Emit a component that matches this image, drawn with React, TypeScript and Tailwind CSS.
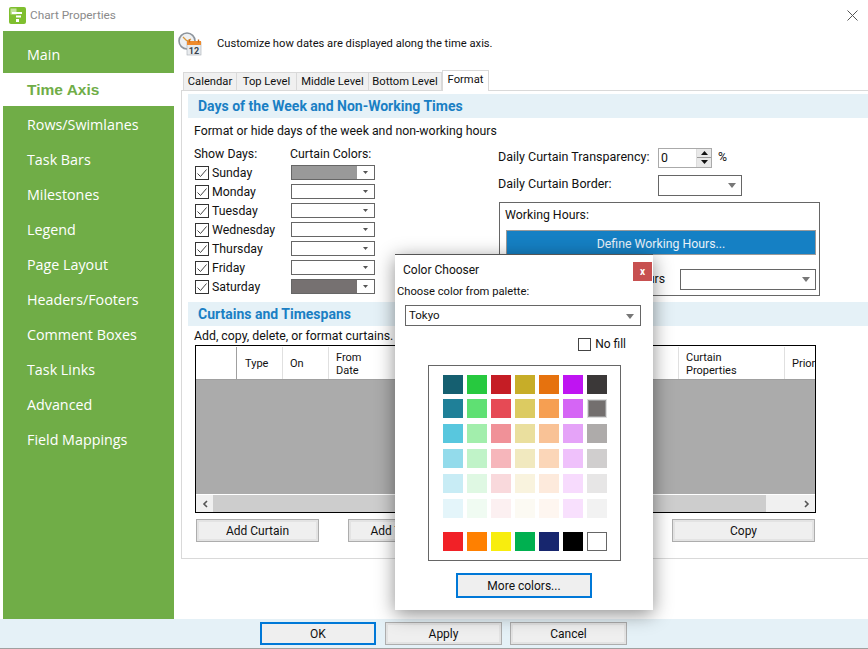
import type { ReactNode } from 'react';

const navItems = ['Main', 'Time Axis', 'Rows/Swimlanes', 'Task Bars', 'Milestones', 'Legend', 'Page Layout', 'Headers/Footers', 'Comment Boxes', 'Task Links', 'Advanced', 'Field Mappings'];
const tabs = [
  { label: 'Calendar', width: 'w-[54px]' },
  { label: 'Top Level', width: 'w-[60px]' },
  { label: 'Middle Level', width: 'w-[72px]' },
  { label: 'Bottom Level', width: 'w-[73px]' },
];
const days = [
  { name: 'Sunday', color: 'bg-[#999999]' },
  { name: 'Monday', color: 'bg-white' },
  { name: 'Tuesday', color: 'bg-white' },
  { name: 'Wednesday', color: 'bg-white' },
  { name: 'Thursday', color: 'bg-white' },
  { name: 'Friday', color: 'bg-white' },
  { name: 'Saturday', color: 'bg-[#767171]' },
];
const palette = [
  ['#155f70', '#27c93f', '#c51d25', '#c7ad28', '#e6720e', '#bf14f2', '#3b3838'],
  ['#1f8098', '#5fe073', '#e64a55', '#dccb61', '#f69f52', '#d565f5', '#736f6e'],
  ['#58c7de', '#a2eeac', '#f09198', '#eadf9e', '#f9c296', '#e5a3f8', '#aeabaa'],
  ['#93dbeb', '#c0f3c8', '#f6b6bb', '#f1e9bf', '#fbd6b8', '#efc1fb', '#d0cece'],
  ['#c8ecf5', '#dff8e3', '#f9d9dc', '#f9f3de', '#fdeadc', '#f7dbfd', '#e7e6e6'],
  ['#e4f5fa', '#f0fbf2', '#fcf0f1', '#fcfaf3', '#fef6f0', '#f8e0fd', '#f2f2f2'],
];
const standard = ['#f12127', '#ff8000', '#f8ed0e', '#00b050', '#17266e', '#000000'];

function Caret({ small }: { small?: boolean }) {
  return small ? (
    <svg width="5" height="3" viewBox="0 0 5 3"><path d="M0 0h5L2.5 3z" fill="#555" /></svg>
  ) : (
    <svg width="8" height="5" viewBox="0 0 8 5"><path d="M0 0h8L4 5z" fill="#777" /></svg>
  );
}

function Check() {
  return (
    <span className="flex h-[14px] w-[14px] shrink-0 items-center justify-center border border-[#333] bg-white">
      <svg width="12" height="12" viewBox="0 0 12 12" fill="none"><path d="M1.5 6.5 4.5 9.5 10.5 2.5" stroke="#444" strokeWidth="1" /></svg>
    </span>
  );
}

function Btn({ children, className, primary }: { children: ReactNode; className: string; primary?: boolean }) {
  return (
    <button
      className={`${className} flex items-center justify-center bg-[#efefef] text-[12px] text-[#111] ${primary ? 'border-2 border-[#0078d7]' : 'border border-[#adadad] shadow-[inset_0_0_0_2px_#e3e3e3]'}`}
    >
      {children}
    </button>
  );
}

function SectionHead({ children }: { children: ReactNode }) {
  return <div className="flex h-[24px] items-center bg-[#e5f1f7] pl-[10px] text-[14px] font-bold text-[#1a7fc4]">{children}</div>;
}

function ComboBox({ className }: { className: string }) {
  return (
    <div className={`${className} flex items-center justify-end border border-[#666] bg-white pr-[5px]`}>
      <Caret />
    </div>
  );
}

function TimeIcon() {
  return (
    <svg width="24" height="24" viewBox="0 0 24 24" className="mt-[1px]">
      <circle cx="9" cy="9" r="8" fill="#eef0f2" stroke="#8d949c" strokeWidth="1.6" />
      <path d="M9 9 5 5M9 9l4-2" stroke="#d9963a" strokeWidth="1.2" />
      <rect x="9" y="10" width="14" height="13" fill="#e8ebee" stroke="#a6acb3" strokeWidth="0.6" />
      <rect x="9" y="9" width="14" height="4" fill="#ee8a2c" />
      <path d="M11.5 7.5v3M20.5 7.5v3" stroke="#c96a16" strokeWidth="1.4" />
      <text x="16" y="21.5" textAnchor="middle" fontSize="9" fontWeight="700" fill="#38424c">12</text>
    </svg>
  );
}

function Logo() {
  return (
    <svg width="17" height="17" viewBox="0 0 17 17">
      <rect width="17" height="17" rx="2" fill="#7fbf2f" />
      <rect x="1.5" y="1.5" width="6" height="6" fill="#c4e39a" />
      <path d="M3 5h10v2H3zM7 8.5h5v2H7zM7 12h3v3H7z" fill="#fff" />
    </svg>
  );
}

function ColorChooser() {
  return (
    <div className="absolute left-[395px] top-[254px] z-10 flex h-[356px] w-[258px] flex-col border-t border-[#555] bg-white shadow-[0_4px_18px_rgba(0,0,0,0.45)]">
      <div className="flex h-[27px] items-start justify-between pl-[8px] pr-[1px]">
        <span className="mt-[8px] text-[12px] leading-[14px] text-[#111]">Color Chooser</span>
        <span className="mt-[7px] flex h-[19px] w-[19px] items-center justify-center bg-[#c75050] text-[10px] font-bold leading-none text-white">x</span>
      </div>
      <div className="mt-[3px] pl-[2px] text-[11.2px] leading-[14px] text-[#111]">Choose color from palette:</div>
      <div className="ml-[10px] mt-[6px] flex h-[21px] w-[236px] items-center justify-between border border-[#666] pl-[3px] pr-[6px] pt-[1px] text-[11.5px] text-[#111]">
        <span>Tokyo</span>
        <Caret />
      </div>
      <div className="mr-[27px] mt-[11px] flex items-center justify-end gap-[4px] text-[12px] leading-[14px] text-[#111]">
        <span className="h-[13px] w-[13px] border border-[#444]" />
        No fill
      </div>
      <div className="ml-[33px] mt-[14px] flex h-[196px] w-[193px] flex-col border border-[#666] pl-[14px] pt-[9px]">
        <div className="flex flex-col gap-[6px]">
          {palette.map((row, r) => (
            <div key={r} className={`flex gap-[4px] ${r === 1 ? '-mt-px' : ''}`}>
              {row.map((c, i) => (
                <span
                  key={c}
                  className={`h-[19px] w-[20px] ${r === 1 && i === 6 ? 'border border-[#dddddd] shadow-[inset_0_0_0_1px_#999999]' : ''}`}
                  style={{ backgroundColor: c }}
                />
              ))}
            </div>
          ))}
        </div>
        <div className="mt-[14px] flex gap-[4px]">
          {standard.map(c => (
            <span key={c} className="h-[19px] w-[20px]" style={{ backgroundColor: c }} />
          ))}
          <span className="h-[19px] w-[20px] border border-[#666] bg-white" />
        </div>
      </div>
      <Btn primary className="ml-[61px] mt-[12px] h-[25px] w-[136px]">More colors...</Btn>
    </div>
  );
}

function CurtainTable() {
  return (
    <div className="ml-[7px] mt-[1px] flex h-[168px] w-[621px] flex-col border border-black pt-[1px]">
      <div className="flex h-[33px] shrink-0 border-b border-[#a0a0a0] bg-white pl-[1px] text-[11px] leading-[13px] text-[#111]">
        <div className="w-[40px] border-r border-[#a0a0a0]" />
        <div className="flex w-[46px] items-center border-r border-[#e0e0e0] pl-[8px] pt-[1px]">Type</div>
        <div className="flex w-[46px] items-center border-r border-[#e0e0e0] pl-[7px] pt-[1px]">On</div>
        <div className="flex w-[350px] items-center border-r border-[#e0e0e0] pl-[7px] pt-[1px]">From<br />Date</div>
        <div className="flex w-[106px] items-center border-r border-[#e0e0e0] pl-[7px] pt-[1px]">Curtain<br />Properties</div>
        <div className="flex min-w-0 flex-1 items-center overflow-hidden whitespace-nowrap pl-[7px] pt-[1px]">Priori</div>
      </div>
      <div className="flex-1 bg-[#ababab]" />
      <div className="flex h-[18px] shrink-0 items-center border-t border-white bg-[#f0f0f0]">
        <span className="flex w-[17px] justify-center text-[#555]">
          <svg width="6" height="8" viewBox="0 0 6 8" fill="none"><path d="M5 1 2 4l3 3" stroke="#555" strokeWidth="1.6" /></svg>
        </span>
        <div className="h-full w-[553px] bg-[#cdcdcd]" />
        <span className="ml-auto flex w-[17px] justify-center">
          <svg width="6" height="8" viewBox="0 0 6 8" fill="none"><path d="M1 1l3 3-3 3" stroke="#555" strokeWidth="1.6" /></svg>
        </span>
      </div>
    </div>
  );
}

export default function App() {
  return (
    <div className="relative flex h-[649px] w-[868px] flex-col overflow-hidden bg-white font-['Roboto',sans-serif] text-[12.3px] text-[#111]">
      {/* title bar */}
      <div className="flex h-[31px] shrink-0 items-center pl-[9px] pr-[10px]">
        <Logo />
        <span className="ml-[4px] text-[11.8px] text-[#8a8a8a]">Chart Properties</span>
        <svg className="ml-auto" width="11" height="11" viewBox="0 0 11 11"><path d="M.5.5l10 10M10.5.5l-10 10" stroke="#555" strokeWidth="1" /></svg>
      </div>

      <div className="flex min-h-0 flex-1">
        {/* left nav */}
        <div className="ml-[3px] w-[171px] shrink-0 bg-[#70ad47] pt-[6px] font-['Open_Sans',sans-serif]">
          {navItems.map(item => (
            <div
              key={item}
              className={`flex h-[35px] items-center pl-[24px] ${item === 'Time Axis' ? "border-y border-[#70ad47] bg-white pt-px font-['Liberation_Sans',sans-serif] text-[15.5px] font-bold text-[#70ad47]" : 'text-[14.3px] text-white'}`}
            >
              {item}
            </div>
          ))}
        </div>

        <div className="min-w-0 flex-1">
          <div className="flex h-[41px] items-start pl-[4px]">
            <TimeIcon />
            <span className="ml-[15px] mt-[5px] text-[11.2px] leading-[16px]">Customize how dates are displayed along the time axis.</span>
          </div>

          <div className="ml-[9px] flex h-[18px] items-end text-[11.2px]">
            {tabs.map(t => (
              <div key={t.label} className={`flex h-[18px] items-center justify-center border-r border-t border-[#d9d9d9] bg-[#f0f0f0] pt-[2px] first:border-l ${t.width}`}>
                {t.label}
              </div>
            ))}
            <div className="relative top-[1px] flex h-[21px] w-[47px] items-center justify-center border-x border-t border-[#d9d9d9] bg-white pb-[2px]">Format</div>
          </div>

          {/* tab panel */}
          <div className="ml-[7px] h-[469px] border-y border-l border-[#d9d9d9] pl-[6px] pt-[3px]">
            <SectionHead>Days of the Week and Non-Working Times</SectionHead>
            <div className="ml-[6px] mt-[5px] leading-[16px]">Format or hide days of the week and non-working hours</div>

            <div className="mt-[7px] flex h-[156px]">
              <div className="ml-[6px] w-[304px]">
                <div className="flex h-[16px] items-center">
                  <span className="w-[96px]">Show Days:</span>
                  <span>Curtain Colors:</span>
                </div>
                <div className="mt-[3px] flex flex-col gap-[4px]">
                  {days.map(d => (
                    <div key={d.name} className="flex h-[15px] items-center">
                      <span className="ml-px"><Check /></span>
                      <span className="ml-[3px] w-[79px] pt-[1px]">{d.name}</span>
                      <div className="flex h-[15px] w-[84px] border border-[#666] bg-white">
                        <div className={`h-full w-[65px] ${d.color}`} />
                        <div className="flex flex-1 items-center justify-center"><Caret small /></div>
                      </div>
                    </div>
                  ))}
                </div>
              </div>

              <div className="mt-[1px] flex flex-col">
                <div className="flex h-[21px] items-center">
                  <span className="w-[160px] pb-[1px] text-[12.5px]">Daily Curtain Transparency:</span>
                  <div className="flex h-[20px] w-[54px] items-stretch border border-[#aaa] bg-white pl-[2px]">
                    <span className="flex-1 leading-[18px]">0</span>
                    <div className="flex w-[15px] flex-col border-l border-[#ddd] bg-[#e8e8e8]">
                      <span className="flex flex-1 items-center justify-center border-b border-[#999]"><svg width="7" height="4" viewBox="0 0 7 4"><path d="M0 4h7L3.5 0z" fill="#111" /></svg></span>
                      <span className="flex flex-1 items-center justify-center"><svg width="7" height="4" viewBox="0 0 7 4"><path d="M0 0h7L3.5 4z" fill="#111" /></svg></span>
                    </div>
                  </div>
                  <span className="ml-[6px]">%</span>
                </div>
                <div className="mt-[7px] flex h-[21px] items-center">
                  <span className="w-[160px] pb-[3px] text-[12.5px]">Daily Curtain Border:</span>
                  <ComboBox className="h-[21px] w-[84px]" />
                </div>
                <div className="ml-px mt-[6px] h-[94px] w-[321px] border border-[#666] pl-[5px] pt-[4px]">
                  <div className="leading-[16px]">Working Hours:</div>
                  <div className="ml-px mt-[7px] flex h-[25px] w-[310px] items-center justify-center border border-[#9a9a9a] bg-[#1580c4] pt-[3px] text-[#e8f1f8]">Define Working Hours...</div>
                  <div className="mt-[14px] flex items-center">
                    <span className="w-[160px] whitespace-nowrap text-right">Hours</span>
                    <ComboBox className="ml-[15px] h-[21px] w-[136px]" />
                  </div>
                </div>
              </div>
            </div>

            <SectionHead>Curtains and Timespans</SectionHead>
            <div className="ml-[6px] mt-[2px] leading-[16px]">Add, copy, delete, or format curtains.</div>
            <CurtainTable />
            <div className="ml-[8px] mt-[6px] flex">
              <Btn className="h-[23px] w-[123px]">Add Curtain</Btn>
              <Btn className="ml-[29px] h-[23px] w-[122px]">Add Timespan</Btn>
              <Btn className="ml-[202px] h-[23px] w-[143px]">Copy</Btn>
            </div>
          </div>
        </div>
      </div>

      {/* bottom buttons */}
      <div className="flex h-[30px] shrink-0 items-center border-b border-[#a0a0a0] bg-[#e5f1f7] pl-[260px]">
        <Btn primary className="h-[23px] w-[116px]">OK</Btn>
        <Btn className="ml-[9px] h-[23px] w-[117px]">Apply</Btn>
        <Btn className="ml-[8px] h-[23px] w-[117px]">Cancel</Btn>
      </div>

      <ColorChooser />
    </div>
  );
}
